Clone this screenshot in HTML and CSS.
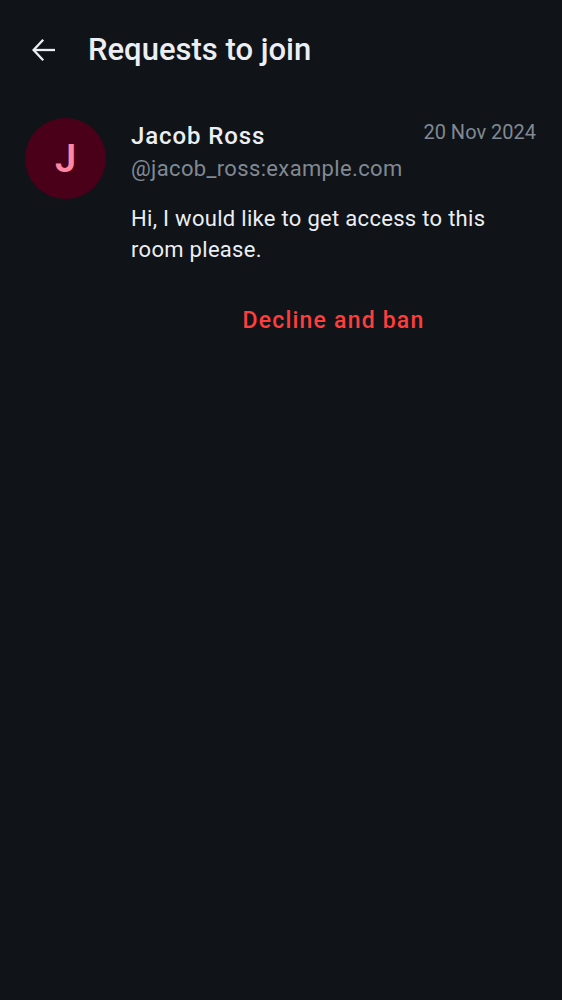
FILE: index.html
```html
<!DOCTYPE html>
<html lang="en">
<head>
<meta charset="utf-8">
<title>Requests to join</title>
<link rel="stylesheet" href="styles.css">
</head>
<body>
<div class="screen">
  <header class="topbar">
    <button class="back" aria-label="Back">
      <svg width="24" height="24" viewBox="0 0 24 24" fill="none" stroke="currentColor" stroke-width="2.3" stroke-linecap="butt" stroke-linejoin="miter">
        <path d="M23 12H2"/>
        <path d="M11.2 1.8L1.6 12l9.6 10.2"/>
      </svg>
    </button>
    <h1 class="title">Requests to join</h1>
  </header>

  <div class="request">
    <div class="avatar">J</div>
    <div class="details">
      <div class="head">
        <div class="who">
          <div class="name">Jacob Ross</div>
          <div class="handle">@jacob_ross:example.com</div>
        </div>
        <div class="date">20 Nov 2024</div>
      </div>
      <p class="message">Hi, I would like to get access to this room please.</p>
      <button class="ban">Decline and ban</button>
    </div>
  </div>
</div>
</body>
</html>
```

FILE: styles.css
```css
html, body {
  margin: 0;
  padding: 0;
  background: #101317;
}
body {
  font-family: Roboto, "Noto Sans", sans-serif;
  color: #ebeef2;
}
.screen {
  width: 562px;
  min-height: 1000px;
  background: #101317;
}
.topbar {
  display: flex;
  align-items: center;
  height: 100px;
  padding-left: 32px;
  box-sizing: border-box;
}
.back {
  width: 24px;
  height: 24px;
  padding: 0;
  border: 0;
  background: none;
  color: #ebeef2;
  display: flex;
}
.title {
  margin: 0 0 0 32px;
  font-size: 31px;
  line-height: 36px;
  font-weight: 500;
  letter-spacing: 0;
  color: #ebeef2;
}
.request {
  display: flex;
  gap: 25px;
  padding: 18px 26px 0 25px;
}
.avatar {
  flex: none;
  width: 81px;
  height: 81px;
  border-radius: 50%;
  background: #4a0018;
  color: #ff87a6;
  display: flex;
  align-items: center;
  justify-content: center;
  font-size: 38px;
  font-weight: 600;
}
.details {
  flex: 1;
  display: flex;
  flex-direction: column;
}
.head {
  display: flex;
  justify-content: space-between;
  align-items: flex-start;
}
.name {
  font-size: 24px;
  font-weight: 500;
  line-height: 36px;
  letter-spacing: 0.9px;
  color: #ebeef2;
}
.handle {
  font-size: 22px;
  line-height: 30px;
  letter-spacing: 0.35px;
  color: #808994;
}
.date {
  font-size: 20px;
  line-height: 28px;
  color: #808994;
}
.message {
  margin: 19px 0 0;
  font-size: 22px;
  line-height: 31px;
  letter-spacing: 0.3px;
  color: #ebeef2;
}
.ban {
  align-self: center;
  margin-top: 42px;
  padding: 0;
  border: 0;
  background: none;
  font-family: inherit;
  font-size: 23px;
  line-height: 28px;
  font-weight: 500;
  letter-spacing: 1.2px;
  color: #ff3d3d;
}
```
